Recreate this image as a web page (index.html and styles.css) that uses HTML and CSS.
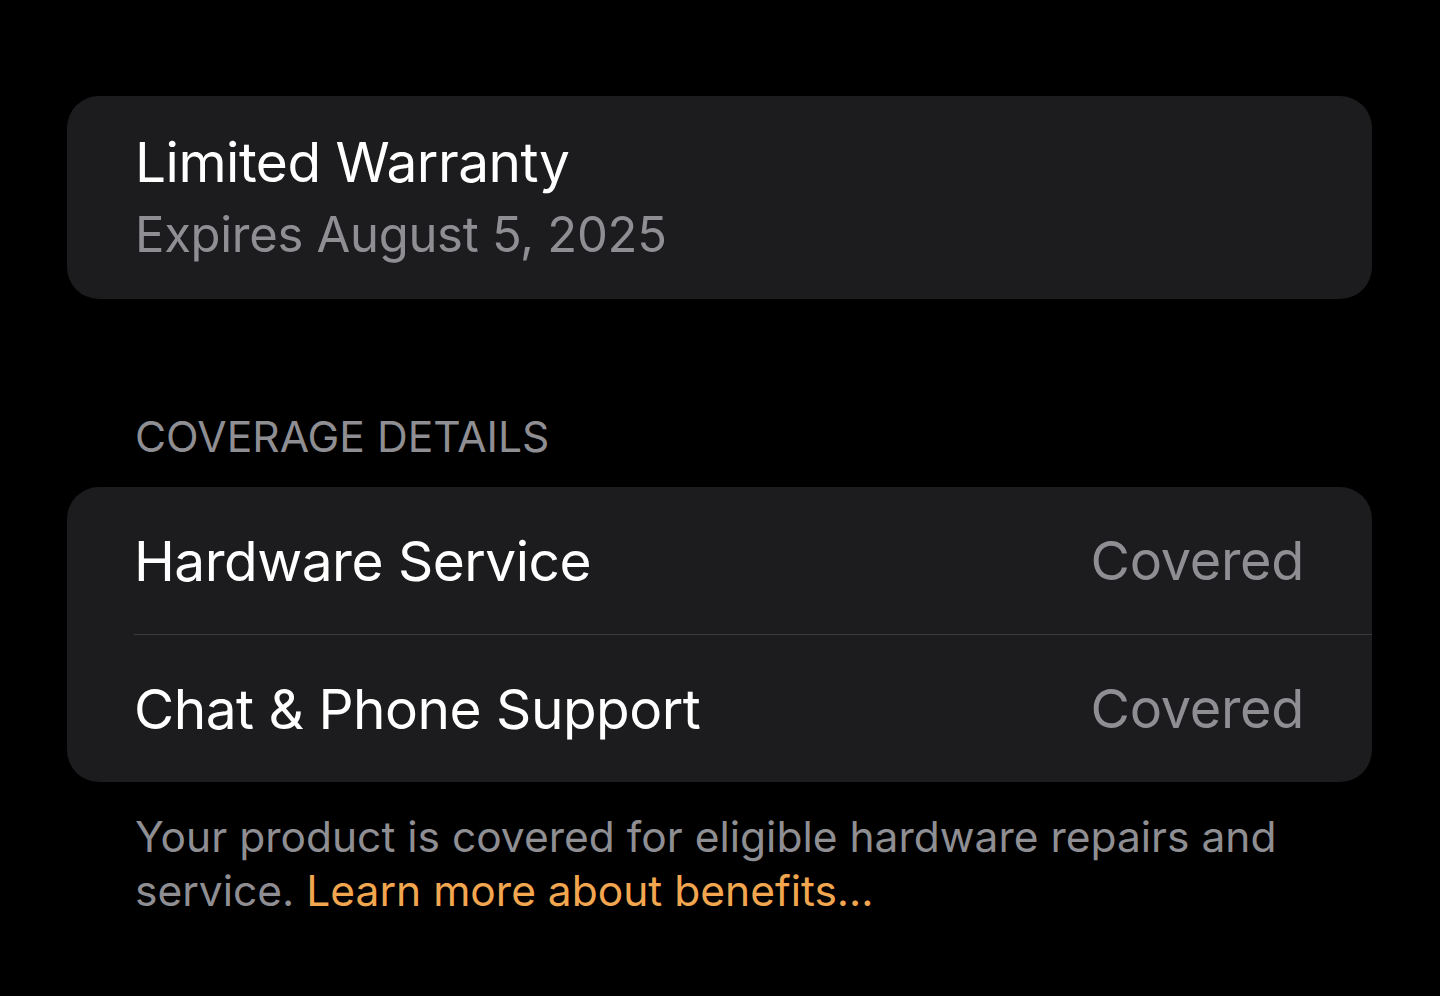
FILE: index.html
```html
<!DOCTYPE html>
<html lang="en">
<head>
<meta charset="utf-8">
<title>Limited Warranty</title>
<link rel="stylesheet" href="styles.css">
</head>
<body>
<main class="page">
  <section class="card warranty">
    <div class="warranty-title">Limited Warranty</div>
    <div class="warranty-sub">Expires August 5, 2025</div>
  </section>

  <h2 class="section-header">COVERAGE DETAILS</h2>
  <section class="card list">
    <div class="row">
      <span class="row-label">Hardware Service</span>
      <span class="row-value">Covered</span>
    </div>
    <div class="row">
      <span class="row-label">Chat &amp; Phone Support</span>
      <span class="row-value">Covered</span>
    </div>
  </section>
  <p class="footer-note">Your product is covered for eligible hardware repairs and service. <a class="link" href="#">Learn more about benefits...</a></p>
</main>
</body>
</html>
```

FILE: styles.css
```css
html, body {
  margin: 0;
  padding: 0;
  background: #000;
  height: 100%;
}
body {
  font-family: Inter, "Noto Sans", "Liberation Sans", sans-serif;
  color: #fff;
  overflow: hidden;
}
.page {
  padding: 96px 68px 0 67px;
  display: flex;
  flex-direction: column;
}
.card {
  background: #1c1c1e;
  border-radius: 32px;
}
.warranty {
  height: 203px;
  box-sizing: border-box;
  padding: 31px 68px 0 68px;
  display: flex;
  flex-direction: column;
}
.warranty-title {
  font-size: 55px;
  line-height: 70px;
  letter-spacing: -0.5px;
}
.warranty-sub {
  font-size: 49px;
  line-height: 76px;
  color: #8e8e93;
  letter-spacing: -0.3px;
}
.section-header {
  margin: 112px 0 0 68px;
  font-weight: 400;
  font-size: 42.6px;
  line-height: 52px;
  color: #8e8e93;
  letter-spacing: 0;
}
.list {
  margin-top: 24px;
  height: 295px;
  display: flex;
  flex-direction: column;
}
.row {
  flex: 1;
  display: flex;
  align-items: center;
  justify-content: space-between;
  margin-left: 67px;
  padding-right: 68px;
}
.row + .row {
  border-top: 1px solid #3a3a3c;
}
.row-label {
  font-size: 55px;
  letter-spacing: -0.5px;
}
.row-value {
  font-size: 54px;
  color: #8e8e93;
  letter-spacing: -0.3px;
}
.footer-note {
  margin: 28px 0 0 68px;
  font-size: 42.5px;
  line-height: 54px;
  color: #8e8e93;
  max-width: 1200px;
}
.link {
  color: #f2a64f;
  text-decoration: none;
}
```
